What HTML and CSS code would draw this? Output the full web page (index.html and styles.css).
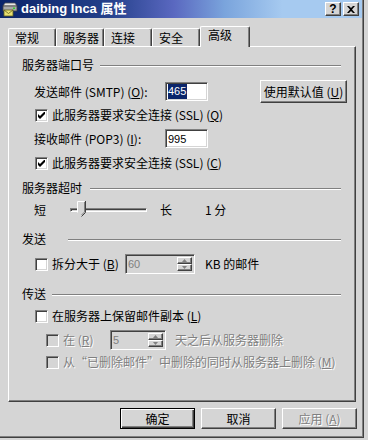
FILE: index.html
```html
<!DOCTYPE html>
<html lang="zh-CN">
<head>
    <meta charset="UTF-8">
    <title>daibing Inca 属性</title>
    <link rel="stylesheet" href="styles.css">
</head>
<body>
    <div class="window">
        <div class="titlebar">
            <svg class="app-icon" width="16" height="16" viewBox="0 0 16 16">
                <path d="M3 2h10l2 3H1z" fill="#e8e8e8" stroke="#505050" stroke-width="0.8"/>
                <rect x="1" y="5" width="14" height="5" fill="#a8a8a8" stroke="#404040" stroke-width="0.8"/>
                <rect x="11" y="6.5" width="2" height="1.5" fill="#30d030"/>
                <rect x="2" y="9" width="9" height="6" fill="#e8e070" stroke="#606020" stroke-width="0.8"/>
                <path d="M2 9l4.5 3.5L11 9" fill="none" stroke="#606020" stroke-width="0.8"/>
            </svg>
            <span class="title">daibing Inca 属性</span>
            <div class="title-buttons">
                <span class="tbtn help">?</span>
                <span class="tbtn">
                    <svg width="8" height="7" viewBox="0 0 8 7"><path d="M0 0h2l2 2 2-2h2L5 3.5 8 7H6L4 5 2 7H0l3-3.5z" fill="#000"/></svg>
                </span>
            </div>
        </div>

        <div class="client">
            <div class="tabs">
                <div class="tab">常规</div>
                <div class="tab">服务器</div>
                <div class="tab">连接</div>
                <div class="tab">安全</div>
                <div class="tab active">高级</div>
            </div>

            <div class="panel">
                <div class="group-head head-ports">
                    <span class="group-label">服务器端口号</span>
                    <span class="rule"></span>
                </div>
                <div class="row row-smtp">
                    <span class="field-label">发送邮件 (SMTP) (<u>O</u>):</span>
                    <span class="textbox"><span class="sel">465</span></span>
                    <span class="btn btn-default-value">使用默认值 (<u>U</u>)</span>
                </div>
                <div class="row check-row row-ssl1">
                    <span class="checkbox checked"><svg width="7" height="7" viewBox="0 0 7 7"><path d="M0 2v3l2 2 5-5V-1L2 4z" fill="#000"/></svg></span>
                    <span class="check-label">此服务器要求安全连接 (SSL) (<u>Q</u>)</span>
                </div>
                <div class="row row-pop3">
                    <span class="field-label">接收邮件 (POP3) (<u>I</u>):</span>
                    <span class="textbox">995</span>
                </div>
                <div class="row check-row row-ssl2">
                    <span class="checkbox checked"><svg width="7" height="7" viewBox="0 0 7 7"><path d="M0 2v3l2 2 5-5V-1L2 4z" fill="#000"/></svg></span>
                    <span class="check-label">此服务器要求安全连接 (SSL) (<u>C</u>)</span>
                </div>

                <div class="group-head head-timeout">
                    <span class="group-label">服务器超时</span>
                    <span class="rule"></span>
                </div>
                <div class="row row-slider">
                    <span class="slider-short">短</span>
                    <span class="track">
                        <svg class="thumb" width="9" height="16" viewBox="0 0 9 16">
                            <path d="M0.5 0.5H8.5V11.5L4.5 15.5L0.5 11.5Z" fill="#d5d5d5"/>
                            <path d="M0.5 11.5V0.5H7.5" fill="none" stroke="#fff"/>
                            <path d="M8.5 0V11.5L4.5 15.5" fill="none" stroke="#404040"/>
                            <path d="M7.5 1V11L4.5 14" fill="none" stroke="#808080"/>
                        </svg>
                    </span>
                    <span class="slider-long">长</span>
                    <span class="slider-value">1 分</span>
                </div>

                <div class="group-head head-send">
                    <span class="group-label">发送</span>
                    <span class="rule"></span>
                </div>
                <div class="row check-row row-split">
                    <span class="checkbox"></span>
                    <span class="check-label split-label">拆分大于 (<u>B</u>)</span>
                    <span class="spin spin-split">
                        <span class="spin-text">60</span>
                        <span class="spin-buttons">
                            <span class="spin-btn"><svg width="5" height="3" viewBox="0 0 5 3"><path d="M2.5 0L5 3H0z" fill="#808080"/></svg></span>
                            <span class="spin-btn"><svg width="5" height="3" viewBox="0 0 5 3"><path d="M0 0h5L2.5 3z" fill="#808080"/></svg></span>
                        </span>
                    </span>
                    <span class="after-spin">KB 的邮件</span>
                </div>

                <div class="group-head head-deliver">
                    <span class="group-label">传送</span>
                    <span class="rule"></span>
                </div>
                <div class="row check-row row-keep">
                    <span class="checkbox"></span>
                    <span class="check-label">在服务器上保留邮件副本 (<u>L</u>)</span>
                </div>
                <div class="row check-row sub-row row-days disabled">
                    <span class="checkbox"></span>
                    <span class="check-label days-label">在 (<u>R</u>)</span>
                    <span class="spin spin-days">
                        <span class="spin-text">5</span>
                        <span class="spin-buttons">
                            <span class="spin-btn"><svg width="5" height="3" viewBox="0 0 5 3"><path d="M2.5 0L5 3H0z" fill="#808080"/></svg></span>
                            <span class="spin-btn"><svg width="5" height="3" viewBox="0 0 5 3"><path d="M0 0h5L2.5 3z" fill="#808080"/></svg></span>
                        </span>
                    </span>
                    <span class="after-spin">天之后从服务器删除</span>
                </div>
                <div class="row check-row sub-row row-deleted disabled">
                    <span class="checkbox"></span>
                    <span class="check-label">从“已删除邮件”中删除的同时从服务器上删除 (<u>M</u>)</span>
                </div>
            </div>

            <div class="actions">
                <span class="btn btn-action default">确定</span>
                <span class="btn btn-action">取消</span>
                <span class="btn btn-action disabled">应用 (<u>A</u>)</span>
            </div>
        </div>
    </div>
</body>
</html>
```

FILE: styles.css
```css
html, body {
    margin: 0;
    padding: 0;
}
body {
    width: 368px;
    height: 440px;
    background-color: #d5d5d5;
    font-family: "Noto Sans CJK SC", "Liberation Sans", sans-serif;
    font-size: 12px;
    line-height: 14px;
    color: #000;
    overflow: hidden;
}
.window {
    width: 364px;
    height: 438px;
    box-sizing: border-box;
    background-color: #d5d5d5;
    border-right: 1px solid #404040;
    border-bottom: 1px solid #404040;
    box-shadow: inset -1px -1px #808080;
}
.titlebar {
    display: flex;
    align-items: center;
    height: 18px;
    margin-right: 1px;
    padding-left: 2px;
    background: linear-gradient(90deg, #0a246a 0%, #24408a 30%, #5a68c0 48%, #7aa4dc 62%, #a6caf0 78%, #a6caf0 100%);
}
.app-icon {
    flex: none;
}
.title {
    margin-left: 3px;
    color: #fff;
    font-weight: bold;
    font-size: 13px;
    font-family: "Liberation Sans", "Noto Sans CJK SC", sans-serif;
    white-space: nowrap;
}
.title-buttons {
    display: flex;
    gap: 2px;
    margin-left: auto;
    margin-right: 3px;
}
.tbtn {
    display: flex;
    align-items: center;
    justify-content: center;
    width: 16px;
    height: 14px;
    box-sizing: border-box;
    background-color: #d5d5d5;
    border: 1px solid;
    border-color: #fff #404040 #404040 #fff;
    box-shadow: inset -1px -1px #808080;
}
.tbtn.help {
    font-family: "Liberation Sans", sans-serif;
    font-weight: bold;
    font-size: 12px;
    line-height: 12px;
}
.client {
    padding: 0 6px 0 8px;
}
.tabs {
    display: flex;
    align-items: flex-end;
    height: 20px;
    margin-top: 8px;
    position: relative;
    z-index: 1;
}
.tab {
    width: 48px;
    height: 18px;
    box-sizing: border-box;
    padding: 2px 0 0 6px;
    border-top: 1px solid #fff;
    border-left: 1px solid #fff;
    border-right: 1px solid #404040;
    border-radius: 2px 2px 0 0;
    box-shadow: inset -1px 0 #808080;
    background-color: #d5d5d5;
    white-space: nowrap;
}
.tab.active {
    width: 50px;
    height: 21px;
    margin-bottom: -1px;
    padding: 1px 0 0 7px;
}
.panel {
    width: 348px;
    height: 356px;
    box-sizing: border-box;
    padding: 0 14px 0 13px;
    border: 1px solid;
    border-color: #fff #404040 #404040 #fff;
    box-shadow: inset -1px -1px #808080;
    display: flex;
    flex-direction: column;
}
.group-head {
    display: flex;
    align-items: center;
    height: 14px;
}
.group-label {
    white-space: nowrap;
}
.rule {
    flex: 1;
    height: 0;
    border-top: 1px solid #808080;
    border-bottom: 1px solid #fff;
    margin-top: 1px;
}
.head-ports { margin-top: 11px; }
.head-ports .group-label { width: 78px; }
.head-timeout { margin-top: 10px; }
.head-timeout .group-label { width: 68px; }
.head-send { margin-top: 14px; }
.head-send .group-label { width: 46px; }
.head-deliver { margin-top: 13px; }
.head-deliver .group-label { width: 30px; }

.row {
    display: flex;
    align-items: center;
    padding-left: 12px;
    white-space: nowrap;
}
.check-row {
    padding-left: 13px;
}
.sub-row {
    padding-left: 24px;
}
.row-smtp { margin-top: 8px; height: 23px; }
.row-ssl1 { margin-top: 4px; height: 16px; }
.row-pop3 { margin-top: 6px; height: 19px; }
.row-ssl2 { margin-top: 7px; height: 16px; }
.row-slider { margin-top: 7px; height: 16px; }
.row-split { margin-top: 8px; height: 20px; }
.row-keep { margin-top: 7px; height: 16px; }
.row-days { margin-top: 6px; height: 20px; }
.row-deleted { margin-top: 4px; height: 16px; }

.field-label {
    width: 131px;
}
.textbox {
    display: flex;
    align-items: center;
    width: 43px;
    height: 19px;
    box-sizing: border-box;
    padding-left: 2px;
    background-color: #fff;
    border: 1px solid;
    border-color: #808080 #fff #fff #808080;
    box-shadow: inset 1px 1px #404040, inset -1px -1px #d5d5d5;
    font-family: "Liberation Sans", sans-serif;
    font-size: 11px;
}
.sel {
    background-color: #0a246a;
    color: #fff;
    line-height: 15px;
    padding-right: 1px;
}
.btn {
    display: flex;
    align-items: center;
    justify-content: center;
    box-sizing: border-box;
    background-color: #d5d5d5;
    border: 1px solid;
    border-color: #fff #404040 #404040 #fff;
    box-shadow: inset -1px -1px #808080;
    white-space: nowrap;
}
.btn-default-value {
    width: 87px;
    height: 23px;
    margin-left: auto;
    margin-right: -6px;
}
.checkbox {
    display: flex;
    align-items: center;
    justify-content: center;
    flex: none;
    width: 13px;
    height: 13px;
    box-sizing: border-box;
    background-color: #fff;
    border: 1px solid;
    border-color: #808080 #fff #fff #808080;
    box-shadow: inset 1px 1px #404040, inset -1px -1px #d5d5d5;
}
.check-label {
    margin-left: 4px;
}
.slider-short {
    width: 12px;
    margin-right: 24px;
}
.track {
    position: relative;
    width: 77px;
    height: 4px;
    box-sizing: border-box;
    border: 1px solid;
    border-color: #808080 #fff #fff #808080;
    box-shadow: inset 1px 1px #404040;
}
.thumb {
    position: absolute;
    left: 6px;
    top: -8px;
}
.slider-long {
    margin-left: 13px;
    width: 12px;
}
.slider-value {
    margin-left: 33px;
}
.split-label {
    width: 73px;
}
.spin {
    display: flex;
    box-sizing: border-box;
    height: 20px;
    padding: 2px;
    border: 1px solid;
    border-color: #808080 #fff #fff #808080;
    box-shadow: inset 1px 1px #404040, inset -1px -1px #d5d5d5;
}
.spin-split { width: 70px; }
.spin-days { width: 56px; }
.spin-text {
    flex: 1;
    color: #808080;
    font-family: "Liberation Sans", sans-serif;
    font-size: 11px;
    line-height: 14px;
}
.spin-buttons {
    display: flex;
    flex-direction: column;
    width: 15px;
}
.spin-btn {
    flex: 1;
    display: flex;
    align-items: center;
    justify-content: center;
    border: 1px solid;
    border-color: #fff #404040 #404040 #fff;
    box-shadow: inset -1px -1px #808080;
}
.after-spin {
    margin-left: 10px;
}
.days-label {
    width: 47px;
}
.row-days .after-spin {
    margin-left: 9px;
}
.disabled .checkbox {
    background-color: #d5d5d5;
}
.disabled .check-label,
.disabled .after-spin,
.btn.disabled {
    color: #808080;
    text-shadow: 1px 1px #fff;
}
.actions {
    display: flex;
    justify-content: flex-end;
    gap: 6px;
    margin-top: 6px;
}
.btn-action {
    width: 75px;
    height: 21px;
}
.btn-action.default {
    border-color: #000;
    box-shadow: inset 1px 1px #fff, inset -1px -1px #404040, inset -2px -2px #808080;
}
```
